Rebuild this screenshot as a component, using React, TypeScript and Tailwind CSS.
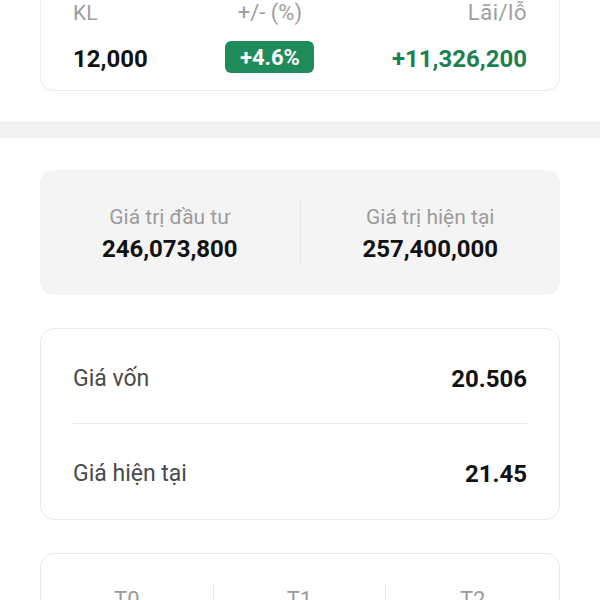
import React from "react";

const font = { fontFamily: "Roboto, 'Noto Sans', sans-serif" };

const SummaryCard = () => (
  <div className="mx-10 rounded-b-[14px] border-x border-b border-[#ececec] px-8 pt-px pb-[15px]">
    <div className="flex justify-between">
      <div className="flex flex-col">
        <span className="text-[21px] leading-6 text-[#9e9e9e]">KL</span>
        <span className="mt-4 pt-0.5 text-[24px] leading-8 font-bold text-[#111]">12,000</span>
      </div>
      <div className="flex flex-col items-center">
        <span className="text-[22px] leading-6 text-[#9e9e9e]">+/- (%)</span>
        <span className="mt-4 flex h-8 w-[89px] items-center justify-center rounded-[6px] bg-[#1f8a5a] text-[22px] font-bold text-white">
          +4.6%
        </span>
      </div>
      <div className="flex flex-col items-end">
        <span className="text-[22px] leading-6 tracking-[0.5px] text-[#9e9e9e]">Lãi/lỗ</span>
        <span className="mt-4 pt-0.5 text-[24px] leading-8 font-bold text-[#1e7f51]">+11,326,200</span>
      </div>
    </div>
  </div>
);

const ValueBox = ({ label, value }: { label: string; value: string }) => (
  <div className="flex flex-1 flex-col items-center pt-0.5">
    <span className="text-[21px] leading-6 text-[#9b9b9b]">{label}</span>
    <span className="mt-1.5 text-[24px] leading-7 font-bold text-[#111]">{value}</span>
  </div>
);

const PriceRow = ({ label, value, last }: { label: string; value: string; last?: boolean }) => (
  <div
    className={`flex h-[95px] items-center justify-between pt-[5px] ${last ? "" : "border-b border-[#e8e8e8]"}`}
  >
    <span className="text-[23px] leading-7 text-[#4a4a4a]">{label}</span>
    <span className="text-[24px] leading-7 font-bold text-[#111]">{value}</span>
  </div>
);

export default function App() {
  return (
    <div className="min-h-[600px] bg-white" style={font}>
      <div className="pb-[31px]">
        <SummaryCard />
      </div>
      <div className="h-4 border-t border-[#ebebeb] bg-[#f3f3f3]" />
      <div className="flex flex-col gap-[33px] px-10 pt-8 pb-10">
        <div className="flex h-[125px] items-center rounded-[14px] bg-[#f4f4f4]">
          <ValueBox label="Giá trị đầu tư" value="246,073,800" />
          <div className="h-[63px] w-px bg-[#e4e4e4]" />
          <ValueBox label="Giá trị hiện tại" value="257,400,000" />
        </div>
        <div className="rounded-[14px] border border-[#ebebeb] px-8">
          <PriceRow label="Giá vốn" value="20.506" />
          <PriceRow label="Giá hiện tại" value="21.45" last />
        </div>
        <div className="rounded-[14px] border border-[#ebebeb] pt-[30px] pb-6">
          <div className="grid grid-cols-3">
            {["T0", "T1", "T2"].map((t, i) => (
              <div
                key={t}
                className={`flex h-[60px] flex-col items-center pt-1 ${i < 2 ? "border-r border-[#e8e8e8]" : ""}`}
              >
                <span className="text-[22px] leading-6 text-[#9b9b9b]">{t}</span>
              </div>
            ))}
          </div>
        </div>
      </div>
    </div>
  );
}
